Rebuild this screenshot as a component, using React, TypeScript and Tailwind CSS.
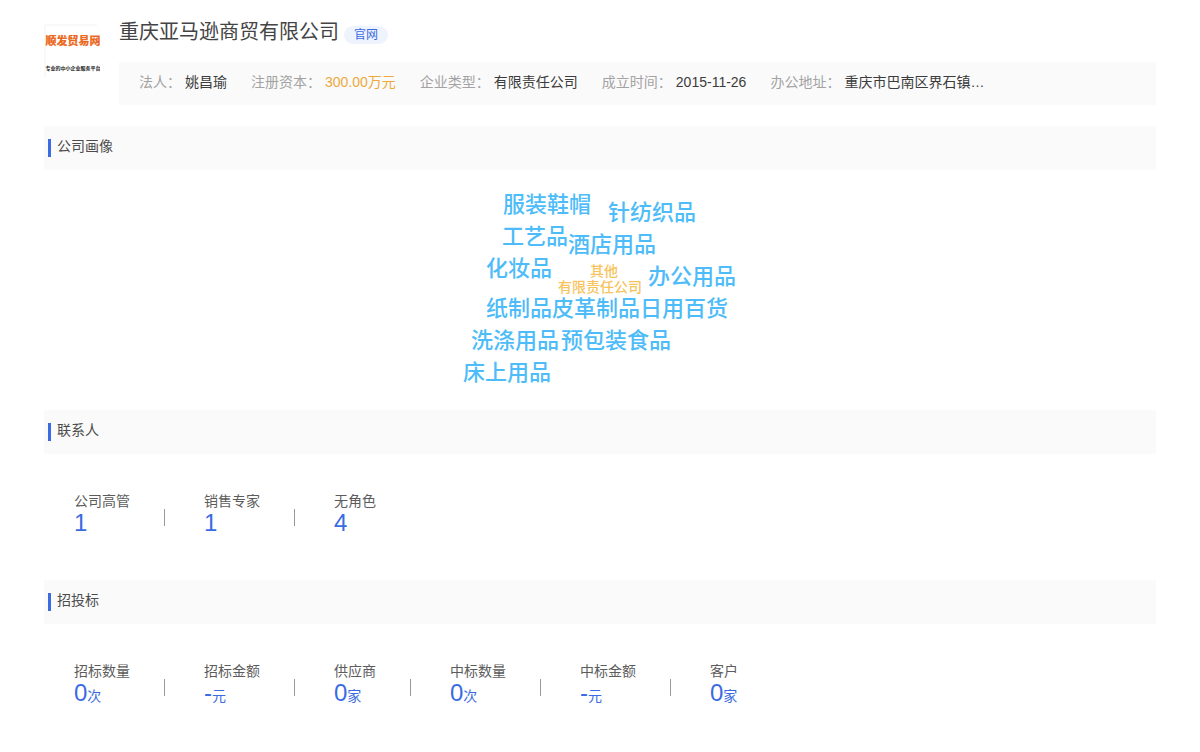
import React from 'react'

const infos = [
  { label: '法人：', value: '姚昌瑜', color: 'text-[#3c3c3c]' },
  { label: '注册资本：', value: '300.00万元', color: 'text-[#eda93a]' },
  { label: '企业类型：', value: '有限责任公司', color: 'text-[#3c3c3c]' },
  { label: '成立时间：', value: '2015-11-26', color: 'text-[#3c3c3c]' },
  { label: '办公地址：', value: '重庆市巴南区界石镇…', color: 'text-[#3c3c3c]' },
]

// word cloud, each word has its own place on the canvas
const words = [
  { text: '服装鞋帽', place: 'left-[53px] top-[23px]' },
  { text: '针纺织品', place: 'left-[158px] top-[31px]' },
  { text: '工艺品', place: 'left-[52px] top-[55px]' },
  { text: '酒店用品', place: 'left-[118px] top-[63px]' },
  { text: '化妆品', place: 'left-[36px] top-[87px]' },
  { text: '办公用品', place: 'left-[198px] top-[95px]' },
  { text: '纸制品', place: 'left-[36px] top-[127px]' },
  { text: '皮革制品', place: 'left-[102px] top-[127px]' },
  { text: '日用百货', place: 'left-[190px] top-[127px]' },
  { text: '洗涤用品', place: 'left-[21px] top-[159px]' },
  { text: '预包装食品', place: 'left-[111px] top-[159px]' },
  { text: '床上用品', place: 'left-[13px] top-[191px]' },
]

const tags = [
  { text: '其他', place: 'left-[140px] top-[93px]' },
  { text: '有限责任公司', place: 'left-[108px] top-[109px]' },
]

const contacts = [
  { label: '公司高管', value: '1', unit: '' },
  { label: '销售专家', value: '1', unit: '' },
  { label: '无角色', value: '4', unit: '' },
]

const bids = [
  { label: '招标数量', value: '0', unit: '次' },
  { label: '招标金额', value: '-', unit: '元' },
  { label: '供应商', value: '0', unit: '家' },
  { label: '中标数量', value: '0', unit: '次' },
  { label: '中标金额', value: '-', unit: '元' },
  { label: '客户', value: '0', unit: '家' },
]

type Stat = { label: string; value: string; unit: string }

const SectionTitle = ({ title }: { title: string }) => (
  <div className="flex h-11 items-start bg-[#fafafa] pl-1 pt-[10px]">
    <span className="mt-[3px] h-[18px] w-[3px] bg-[#3a6be2]"></span>
    <h2 className="ml-[6px] text-sm leading-5 text-[#4c4c4c]">{title}</h2>
  </div>
)

const StatRow = ({ items }: { items: Stat[] }) => (
  <div className="flex flex-wrap px-[30px] pb-11 pt-[37px]">
    {items.map((item, i) => (
      <div key={item.label} className="flex items-center">
        {i > 0 && <span className="ml-[34px] mr-[39px] mt-2 h-[17px] w-px bg-[#999]"></span>}
        <div>
          <p className="text-sm leading-5 text-[#5c5c5c]">{item.label}</p>
          <p className="text-2xl leading-6 text-[#3a6be2]">
            {item.value}
            <span className="text-sm leading-5">{item.unit}</span>
          </p>
        </div>
      </div>
    ))}
  </div>
)

const App = () => {
  return (
    <div className="bg-white px-11 pt-5 font-['Liberation_Sans','Noto_Sans_CJK_SC',sans-serif]">
      {/* company header */}
      <header className="flex">
        <svg className="mt-1 h-14 w-14 shrink-0" viewBox="0 0 56 56" role="img" aria-label="顺发贸易网">
          <path d="M1 1V54M1 1H53" stroke="#f3f3f3" strokeWidth="1" fill="none" />
          <text x="29" y="21" fontSize="11" fontWeight="900" textAnchor="middle" fill="#ec6a1f">顺发贸易网</text>
          <text x="29" y="46" fontSize="5" fontWeight="700" textAnchor="middle" fill="#222">专业的中小企业服务平台</text>
        </svg>
        <div className="ml-[19px] min-w-0 flex-1">
          <div className="flex items-start">
            <h1 className="text-xl leading-6 text-[#444]">重庆亚马逊商贸有限公司</h1>
            <a href="#" className="ml-[5px] mt-[6px] rounded-full bg-[#eff3fd] px-[10px] text-xs leading-[18px] text-[#3a6be2]">官网</a>
          </div>
          <div className="mt-[18px] flex flex-wrap gap-x-6 bg-[#fafafa] px-5 pb-[13px] pt-[10px]">
            {infos.map((info) => (
              <p key={info.label} className="text-sm leading-5">
                <span className="mr-1 text-[#a3a3a3]">{info.label}</span>
                <span className={info.color}>{info.value}</span>
              </p>
            ))}
          </div>
        </div>
      </header>

      {/* portrait */}
      <section className="mt-[21px]">
        <SectionTitle title="公司画像" />
        <div className="relative mx-auto h-60 w-[300px]">
          {words.map((word) => (
            <span key={word.text} className={`absolute whitespace-nowrap text-[22px] font-medium leading-6 text-[#4dbcf8] ${word.place}`}>{word.text}</span>
          ))}
          {tags.map((tag) => (
            <span key={tag.text} className={`absolute whitespace-nowrap text-sm font-medium leading-4 text-[#f7c35c] ${tag.place}`}>{tag.text}</span>
          ))}
        </div>
      </section>

      {/* contacts */}
      <section>
        <SectionTitle title="联系人" />
        <StatRow items={contacts} />
      </section>

      {/* bids */}
      <section>
        <SectionTitle title="招投标" />
        <StatRow items={bids} />
      </section>
    </div>
  )
}

export default App
